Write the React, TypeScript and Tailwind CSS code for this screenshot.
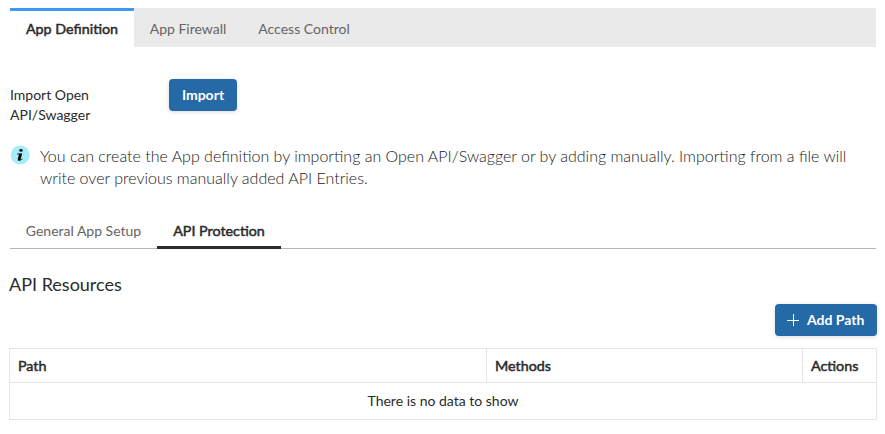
export default function App() {
  return (
    <main className="h-[434px] w-[885px] overflow-hidden bg-white px-[10px] pt-2 font-['Lato',sans-serif] text-sm leading-5 text-[#2b2b2b]">
      <nav className="flex h-[39px] w-[866px] bg-[#eaeaea] text-[14px] text-[#656565]">
        <button className="w-[124px] whitespace-nowrap border-t-[3px] border-[#4098f5] bg-white text-[14.3px] text-[#2b2b2b] [-webkit-text-stroke:0.5px_#2b2b2b]">App Definition</button>
        <button className="w-[108px] pt-[3px]">App Firewall</button>
        <button className="w-[124px] pt-[3px]">Access Control</button>
      </nav>
      <section className="flex h-[97px] pt-8">
        <p className="w-[159px] pt-[6px]">Import Open<br />API/Swagger</p>
        <button className="h-8 w-[68px] rounded-[4px] bg-[#2569a7] font-bold text-white shadow-[0_1px_4px_rgba(0,0,0,0.15)]">Import</button>
      </section>
      <section className="flex h-[71px] gap-[10px]">
        <svg className="mt-[1px] h-5 w-5 shrink-0" viewBox="0 0 20 20">
          <circle cx="10.2" cy="10" r="9.5" fill="#a6ecfb" />
          <ellipse cx="11" cy="5.4" rx="1.7" ry="1.3" fill="#000" />
          <path d="M7.4 8.4h4.8l-1.5 5.4q-.2.8.5.6l1.2-.8.3.5q-1.7 1.8-3.5 1.7-1.9-.1-1.4-1.9l1.3-4.5H7.2Z" fill="#000" />
        </svg>
        <p className="w-[815px] pt-px text-[16px] font-light leading-[22px] text-[#1a1a1a]">You can create the App definition by importing an Open API/Swagger or by adding manually. Importing from a file will write over previous manually added API Entries.</p>
      </section>
      <nav className="flex h-[34px] w-[866px] border-b border-[#b5b5b5] text-[#656565]">
        <button className="w-[147px] pb-[2px]">General App Setup</button>
        <button className="h-[34px] w-[124px] border-b-[3px] border-[#2b2b2b] text-[14.3px] text-[#2b2b2b] [-webkit-text-stroke:0.5px_#2b2b2b]">API Protection</button>
      </nav>
      <h1 className="mt-[23px] -ml-px text-[18px] leading-6">API Resources</h1>
      <div className="mt-[8px] flex w-[867px] justify-end">
        <button className="flex h-8 w-[102px] items-center gap-2 rounded-[4px] bg-[#2569a7] pl-3 font-bold text-white shadow-[0_1px_4px_rgba(0,0,0,0.15)]">
          <svg className="h-3 w-3" viewBox="0 0 12 12"><path d="M6.5 0v12M0 6.5h12" stroke="white" /></svg>
          Add Path
        </button>
      </div>
      <table className="mt-3 -ml-px w-[868px] table-fixed border-collapse border border-[#e5e5e5]">
        <thead>
          <tr className="h-[34px] border-b border-[#e5e5e5] text-left text-[14.3px] [-webkit-text-stroke:0.5px_#2b2b2b]">
            <th className="w-[477px] px-2 font-normal">Path</th>
            <th className="w-[316px] border-l border-[#e5e5e5] px-2 font-normal">Methods</th>
            <th className="border-l border-[#e5e5e5] px-2 font-normal">Actions</th>
          </tr>
        </thead>
        <tbody><tr className="h-[37px]"><td colSpan={3} className="text-center">There is no data to show</td></tr></tbody>
      </table>
    </main>
  );
}
